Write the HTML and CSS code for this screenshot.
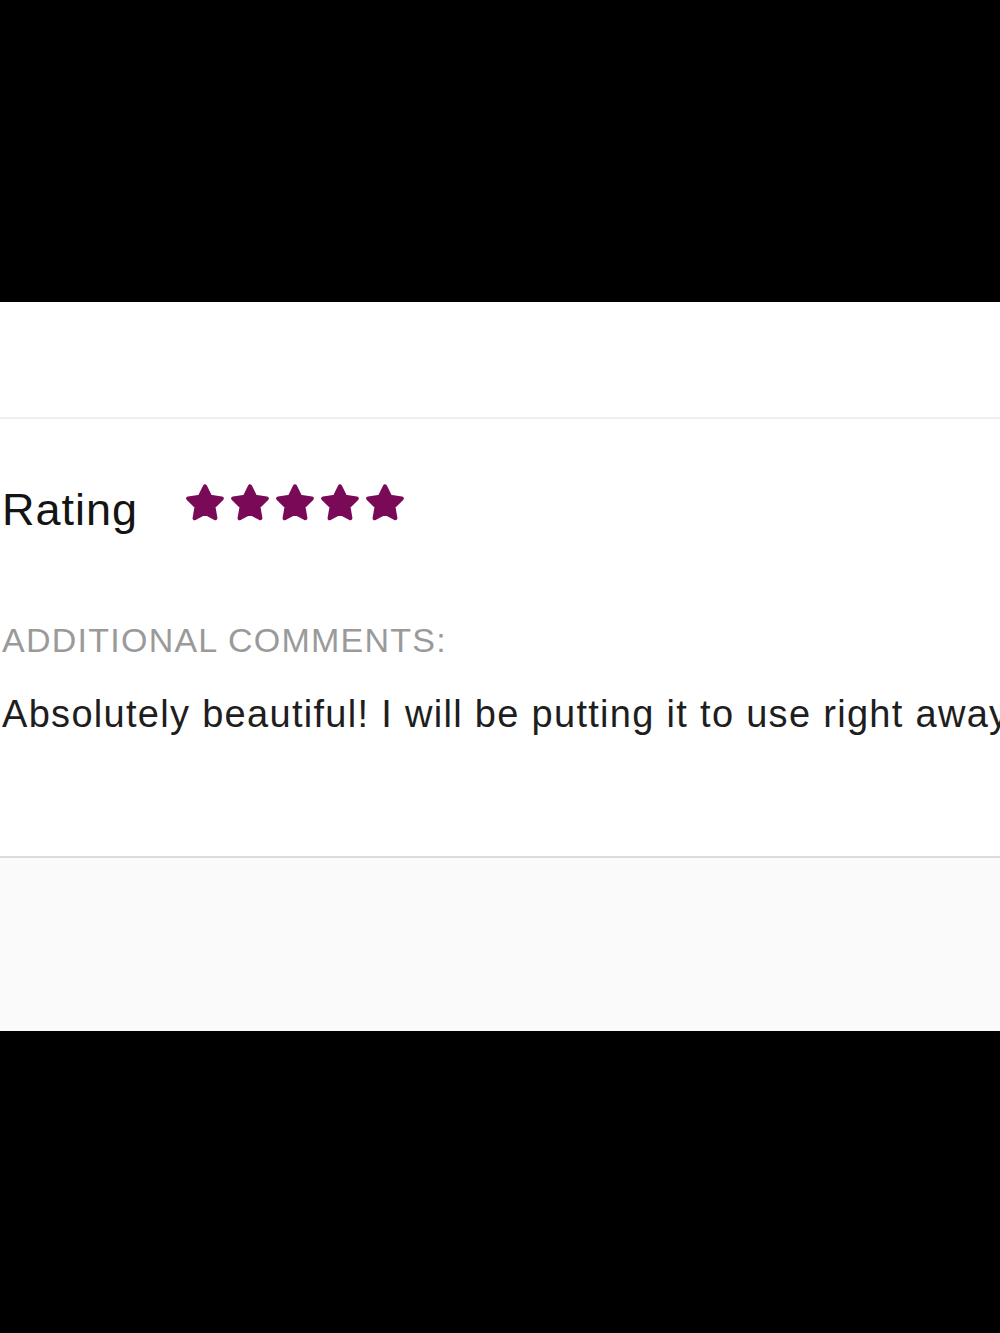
FILE: index.html
```html
<!DOCTYPE html>
<html lang="en">
<head>
<meta charset="utf-8">
<title>Review</title>
<link rel="stylesheet" href="styles.css">
</head>
<body>
<div class="frame">
  <div class="bar-black top"></div>
  <div class="panel">
    <div class="panel-head"></div>
    <div class="review">
      <div class="rating-row">
        <span class="rating-label">Rating</span>
        <div class="stars">
          <svg class="star" viewBox="0 0 24 24"><path d="M12 2.5l2.95 5.98 6.6.96-4.78 4.65 1.13 6.57L12 17.56l-5.9 3.1 1.13-6.57-4.78-4.65 6.6-.96z"/></svg>
          <svg class="star" viewBox="0 0 24 24"><path d="M12 2.5l2.95 5.98 6.6.96-4.78 4.65 1.13 6.57L12 17.56l-5.9 3.1 1.13-6.57-4.78-4.65 6.6-.96z"/></svg>
          <svg class="star" viewBox="0 0 24 24"><path d="M12 2.5l2.95 5.98 6.6.96-4.78 4.65 1.13 6.57L12 17.56l-5.9 3.1 1.13-6.57-4.78-4.65 6.6-.96z"/></svg>
          <svg class="star" viewBox="0 0 24 24"><path d="M12 2.5l2.95 5.98 6.6.96-4.78 4.65 1.13 6.57L12 17.56l-5.9 3.1 1.13-6.57-4.78-4.65 6.6-.96z"/></svg>
          <svg class="star" viewBox="0 0 24 24"><path d="M12 2.5l2.95 5.98 6.6.96-4.78 4.65 1.13 6.57L12 17.56l-5.9 3.1 1.13-6.57-4.78-4.65 6.6-.96z"/></svg>
        </div>
      </div>
      <div class="comments-label">ADDITIONAL COMMENTS:</div>
      <div class="comments-text">Absolutely beautiful! I will be putting it to use right away.</div>
    </div>
    <div class="panel-foot"></div>
  </div>
  <div class="bar-black bottom"></div>
</div>
</body>
</html>
```
FILE: styles.css
```css
html, body {
  margin: 0;
  padding: 0;
  background: #000;
}
body {
  font-family: "Liberation Sans", Arial, Helvetica, sans-serif;
  width: 1000px;
  height: 1333px;
  overflow: hidden;
}
.frame {
  display: flex;
  flex-direction: column;
  height: 1333px;
}
.bar-black {
  background: #000;
}
.bar-black.top {
  height: 302px;
  flex: none;
}
.bar-black.bottom {
  flex: 1;
}
.panel {
  background: #fff;
  flex: none;
}
.panel-head {
  height: 115px;
  border-bottom: 2px solid #efefef;
}
.review {
  padding: 68px 0 123px 2px;
  border-bottom: 2px solid #dcdcdc;
  overflow: hidden;
}
.rating-row {
  display: flex;
  align-items: flex-start;
  height: 45px;
}
.rating-label {
  font-size: 45px;
  line-height: 45px;
  color: #141414;
  letter-spacing: 1px;
}
.stars {
  display: flex;
  gap: 3px;
  margin-left: 46px;
  margin-top: -5px;
}
.star {
  width: 42px;
  height: 42px;
  fill: #7a0a58;
  stroke: #7a0a58;
  stroke-width: 2.4;
  stroke-linejoin: round;
}
.comments-label {
  margin-top: 91px;
  font-size: 34px;
  line-height: 34px;
  color: #9a9a9a;
  letter-spacing: 1.25px;
  white-space: nowrap;
}
.comments-text {
  margin-top: 38px;
  font-size: 38px;
  line-height: 38px;
  color: #1e1e1e;
  white-space: nowrap;
  letter-spacing: 1.3px;
}
.panel-foot {
  height: 173px;
  background: #fafafa;
}
```
